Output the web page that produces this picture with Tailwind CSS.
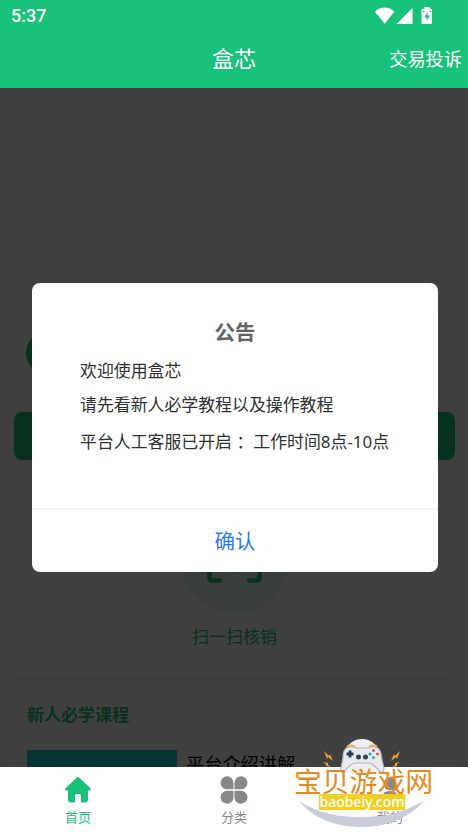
<!DOCTYPE html>
<html lang="zh-CN">
<head>
<meta charset="utf-8">
<meta name="viewport" content="width=device-width, initial-scale=1">
<title>盒芯</title>
<script src="https://cdn.jsdelivr.net/npm/@tailwindcss/browser@4"></script>
</head>
<body class="relative flex h-[832px] w-[468px] flex-col overflow-hidden bg-[#f5f5f5] font-['Noto_Sans','Noto_Sans_CJK_SC',sans-serif]">
  <header class="h-[88px] shrink-0 bg-[#18c27a] text-white">
    <div class="flex h-8 items-center justify-between pr-[35px] pl-[11px]">
      <span class="font-[Roboto,sans-serif] text-[18px] leading-8 font-medium">5:37</span>
      <svg class="h-[18px] w-[58px]" viewBox="0 0 58 18" fill="#fff">
        <path d="M0 4.800C5.500-.8 14-.8 19.300 4.800L9.700 16.800Z"/>
        <path d="M21.500 17L37.500 1V17Z"/>
        <path d="M49.500 0h5v1.800h1.500q1 0 1 1v13.200q0 1-1 1h-8.500q-1 0-1-1V2.800q0-1 1-1h2z"/>
        <path d="M52.500 5v3.500h2.300l-3.300 5.500v-3.800h-2.200zM47.500 4h2v1h-2zM54 4h2v1h-2z" fill="#18c27a"/>
      </svg>
    </div>
    <div class="grid h-[54px] grid-cols-3 items-center">
      <span class="col-start-2 pb-[2px] text-center text-[22px] leading-[52px]">盒芯</span>
      <span class="pr-[6px] text-right text-[18.200px] leading-[54px]">交易投诉</span>
    </div>
  </header>

  <main class="relative min-h-0 flex-1 overflow-hidden pr-[13px] pl-[14px]">
    <div class="h-[207px] bg-linear-to-b from-[#f3f5f4] to-[#f1f6f3]"></div>
    <section class="mt-[11px] flex h-[94px] items-center rounded-lg bg-white pl-3">
      <div class="size-11 rounded-full bg-[#18c27a]"></div>
    </section>
    <section class="mt-3 flex h-12 items-center justify-end rounded-lg bg-[#18c27a] pr-[15px] text-white">查看</section>
    <section class="mt-3 flex h-[205px] flex-col items-center rounded-lg bg-white pt-[33px]">
      <div class="flex size-[108px] items-center justify-center rounded-full bg-[#e6f5f0]">
        <svg class="size-[55px]" viewBox="0 0 55 55" fill="none" stroke="#18c27a" stroke-width="4.500" stroke-linecap="round" stroke-linejoin="round">
          <path d="M12 3H5Q2.500 3 2.500 6V14M43 3H50Q52.500 3 52.500 6V14M2.500 37V45.500Q2.500 48.500 5.500 48.500H13M42 48.500H49.500Q52.500 48.500 52.500 45.500V37"/><path stroke-width="2" d="M27.500 16V40"/>
        </svg>
      </div>
      <p class="mt-[12px] text-[17px] leading-6 text-[#18c27a]">扫一扫核销</p>
    </section>
    <section class="mt-3 h-[200px] rounded-lg bg-white px-[13px] pt-[14px]">
      <h2 class="text-[17px] leading-6 font-bold text-[#18c27a]">新人必学课程</h2>
      <div class="mt-[23px] flex">
        <div class="h-24 w-[150px] bg-[#10d0cc]"></div>
        <p class="ml-[9px] text-[18.200px] leading-[28px] text-black">平台介绍讲解</p>
      </div>
    </section>
    <div class="absolute inset-0 bg-black/75"></div>
  </main>

  <nav class="grid h-[65px] shrink-0 grid-cols-3 bg-white text-[13px] leading-[18px] text-[#888]">
    <div class="flex flex-col items-center pt-[9px] text-[#18c27a]">
      <svg class="size-7" viewBox="0 0 28 28" fill="currentColor"><path d="M12.800 1.500Q14 .4 15.200 1.500L26.700 12.500Q27.500 14.500 26 14.500H24V23.500Q24 26.500 21 26.500H17V19.500Q17 18 15.500 18H12.500Q11 18 11 19.500V26.500H7Q4 26.500 4 23.500V14.500H2Q.5 14.500 1.300 12.500Z"/></svg>
      <span class="mt-[4px]">首页</span>
    </div>
    <div class="flex flex-col items-center pt-[9px]">
      <svg class="size-7" viewBox="0 0 28 28" fill="currentColor"><path d="M7 .3A6.500 6.500 0 0 1 13.500 7V13.300H7A6.500 6.500 0 0 1 7 .3ZM21 .3A6.500 6.500 0 0 1 21 13.300H14.500V7A6.500 6.500 0 0 1 21 .3ZM7 14.700H13.500V21A6.500 6.500 0 1 1 7 14.700ZM14.500 14.700H21A6.500 6.500 0 1 1 14.500 21Z"/></svg>
      <span class="mt-[4px]">分类</span>
    </div>
    <div class="flex flex-col items-center pt-[9px]">
      <svg class="size-7" viewBox="0 0 28 28" fill="currentColor"><circle cx="14" cy="8" r="6.500"/><path d="M7 17Q14 13 21 17L18 19H10Z"/></svg>
      <span class="mt-[4px]">我的</span>
    </div>
  </nav>

  <div role="dialog" class="absolute top-[283px] left-8 flex h-[289px] w-[406px] flex-col rounded-lg bg-white">
    <h1 class="mt-[34px] text-center text-[20.500px] leading-[30px] font-bold text-[#606266]">公告</h1>
    <div class="mt-[11px] flex-1 px-[48px] text-[16.900px] leading-[25px] text-[#303133]">
      <p>欢迎使用盒芯</p>
      <p class="mt-[9px]">请先看新人必学教程以及操作教程</p>
      <p class="mt-[12px] whitespace-nowrap">平台人工客服已开启 ：工作时间8点-10点</p>
    </div>
    <button class="h-[64px] border-t-2 border-[#f3f4f5] text-[20.500px] text-[#2f7ae5]">确认</button>
  </div>

  <div class="absolute top-[735px] left-[290px] h-[97px] w-[150px]">
    <svg class="absolute inset-0" width="150" height="97" viewBox="0 0 150 97">
      <path d="M9 66C32 80 52 82 72 82S112 79 135 65C120 82 98 92 72 92S24 84 9 66Z" fill="#c9ccd9"/>
      <circle cx="72" cy="22" r="18" fill="#efeff1"/>
      <path d="M57 12.500Q62 10.500 66 13H78Q82 10.500 87 12.500Q91 15 91.500 22L94 34Q93 40 89 36Q84 29 79 28H65Q60 29 55 36Q51 40 51 34L53 22Q53 15 57 12.500Z" fill="#e9e9ee" stroke="#aeb1c1" stroke-width="1.200"/>
      <path d="M57 11.500q4-2 8 0M79 11.500q4-2 8 0" fill="none" stroke="#dfb65b" stroke-width="2"/>
      <path d="M56.500 19h7M60 15.500v7" stroke="#263a52" stroke-width="2.800"/>
      <circle cx="68.500" cy="22" r="2.500" fill="#344656"/><circle cx="75.500" cy="22" r="2.500" fill="#344656"/>
      <circle cx="83.500" cy="15.500" r="1.500" fill="#e34b4b"/><circle cx="87.500" cy="19" r="1.500" fill="#e34b4b"/><circle cx="80" cy="19" r="1.500" fill="#28a4b5"/><circle cx="83.500" cy="22.500" r="1.500" fill="#28a4b5"/>
      <path d="M34 16l5 5 1-2 3 7-5-4-1 2zM110 16l-5 5-1-2-3 7 5-4 1 2zM33 27l5 1v2l3 2-5-1v-2zM110 27l-5 1v2l-3 2 5-1v-2z" fill="#eda42d"/>
    </svg>
    <div class="absolute top-[27px] left-[4px] text-[27.800px] leading-[38px] whitespace-nowrap text-[#e58a20]">宝贝游戏网</div>
    <div class="absolute top-[59px] left-[29px] flex h-[16px] w-[86px] items-center justify-center bg-[#efd023] pb-[1px] text-[14px] leading-[15px] font-medium text-white">baobeiy.com</div>
  </div>
</body>
</html>
